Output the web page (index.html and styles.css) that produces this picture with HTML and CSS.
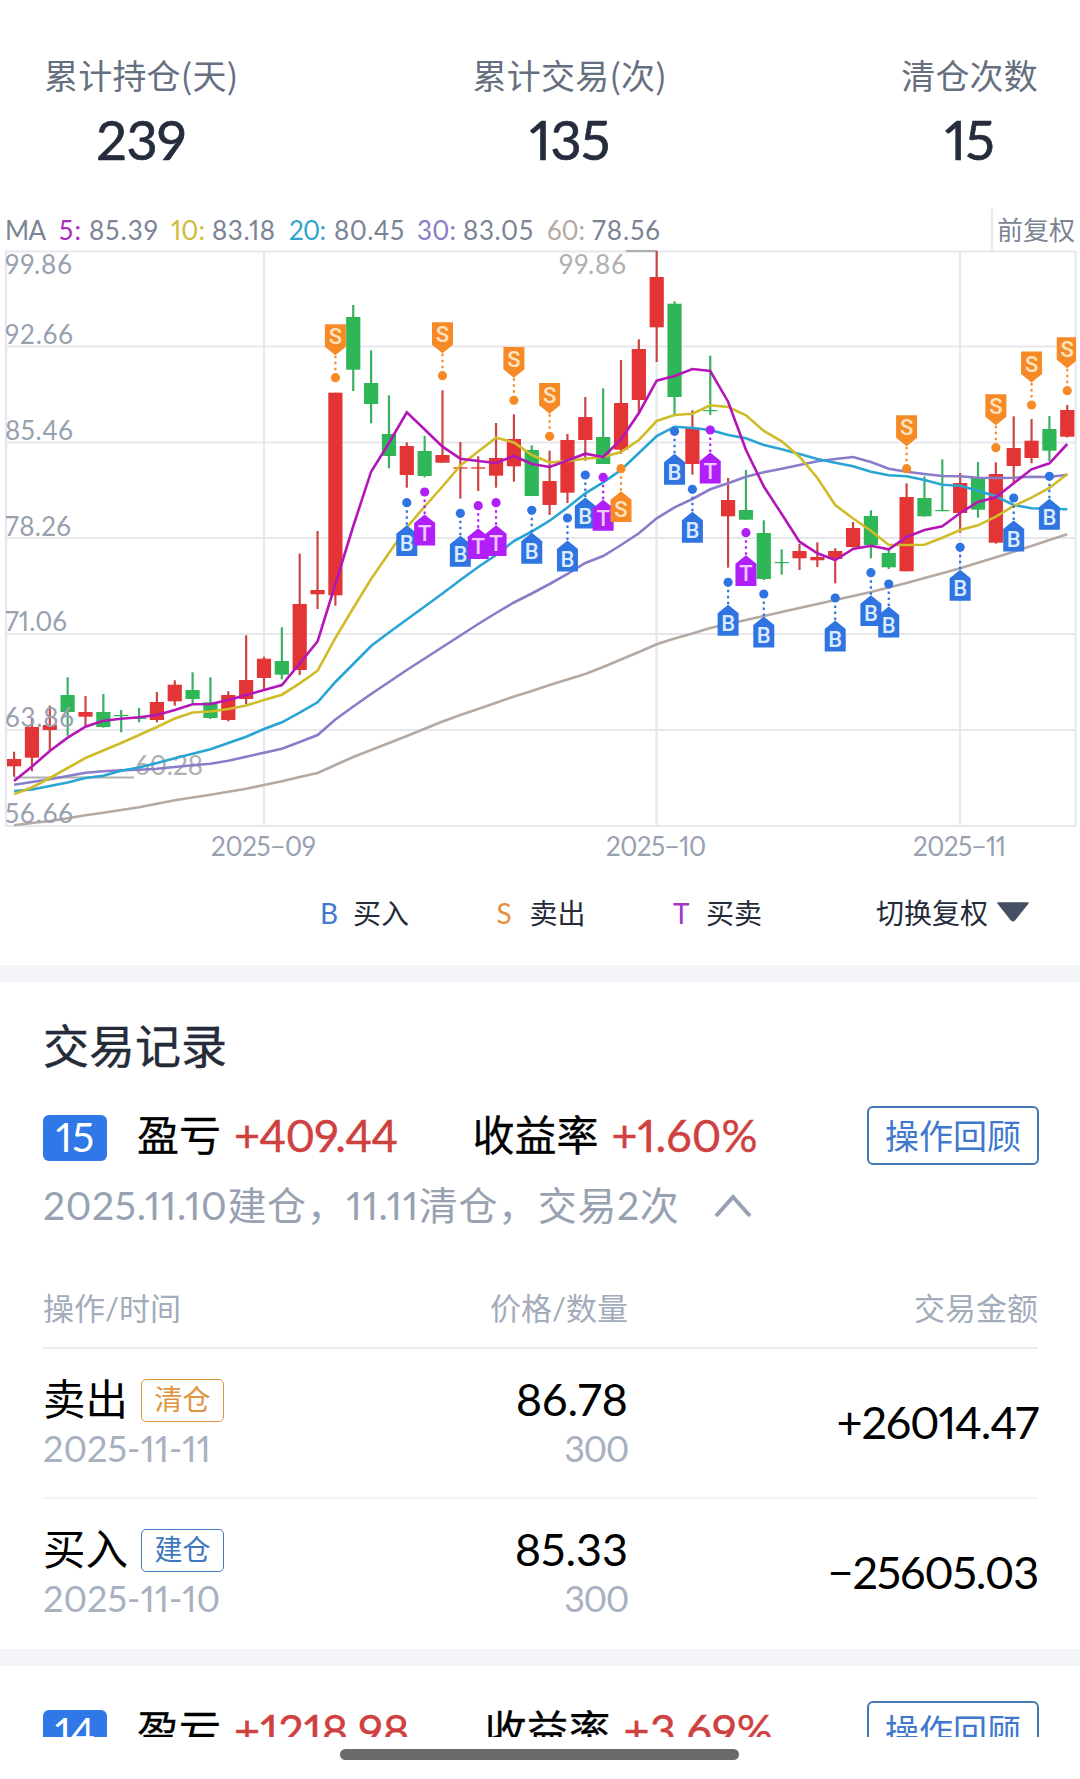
FILE: index.html
```html
<!DOCTYPE html>
<html lang="zh-CN">
<head>
    <meta charset="UTF-8">
    <meta name="viewport" content="width=device-width, initial-scale=1.0">
    <title>交易记录</title>
    <link rel="stylesheet" href="styles.css">
</head>
<body>
    <div class="page">
        <div class="stats">
            <div class="stat">
                <div class="stat-label">累计持仓(天)</div>
                <div class="stat-value">239</div>
            </div>
            <div class="stat">
                <div class="stat-label">累计交易(次)</div>
                <div class="stat-value">135</div>
            </div>
            <div class="stat">
                <div class="stat-label">清仓次数</div>
                <div class="stat-value">15</div>
            </div>
        </div>

        <svg id="chart" class="chart" width="1080" height="680" viewBox="0 200 1080 680"></svg>

        <div class="legend">
            <div class="legend-item"><span class="mark-b">B</span>买入</div>
            <div class="legend-item"><span class="mark-s">S</span>卖出</div>
            <div class="legend-item"><span class="mark-t">T</span>买卖</div>
            <div class="adjust">切换复权
                <svg width="34" height="20" viewBox="0 0 34 20"><path d="M2 1H32L18.5 18Q17 19.500 15.500 18Z" fill="#455064" stroke="#455064" stroke-width="1.500" stroke-linejoin="round"/></svg>
            </div>
        </div>

        <div class="divider"></div>

        <div class="records">
            <h2 class="records-title">交易记录</h2>
            <div class="record-head">
                <span class="badge">15</span>
                <span class="label">盈亏</span><span class="gain">+409.44</span>
                <span class="label label-rate">收益率</span><span class="gain gain-wide">+1.60%</span>
                <span class="review">操作回顾</span>
            </div>
            <div class="summary">
                <span>2025.11.10建仓，11.11清仓，交易2次</span>
                <svg width="40" height="26" viewBox="0 0 40 26"><path d="M3 23L20 4L37 23" fill="none" stroke="#98a1b1" stroke-width="4"/></svg>
            </div>
            <div class="table-head">
                <span>操作/时间</span>
                <span>价格/数量</span>
                <span>交易金额</span>
            </div>
            <div class="row">
                <div>
                    <div class="op">卖出<span class="tag tag-sell">清仓</span></div>
                    <div class="sub">2025‑11‑11</div>
                </div>
                <div class="price">
                    <div class="num">86.78</div>
                    <div class="sub count">300</div>
                </div>
                <div class="num amount">+26014.47</div>
            </div>
            <div class="row">
                <div>
                    <div class="op">买入<span class="tag tag-buy">建仓</span></div>
                    <div class="sub">2025‑11‑10</div>
                </div>
                <div class="price">
                    <div class="num">85.33</div>
                    <div class="sub count">300</div>
                </div>
                <div class="num amount">−25605.03</div>
            </div>
        </div>

        <div class="divider"></div>

        <div class="records next">
            <div class="record-head">
                <span class="badge">14</span>
                <span class="label">盈亏</span><span class="gain gain-wide">+1218.98</span>
                <span class="label label-rate">收益率</span><span class="gain gain-wide">+3.69%</span>
                <span class="review">操作回顾</span>
            </div>
        </div>
    </div>
    <div class="home-bar"></div>

<script src="chart.js"></script>
</body>
</html>
```
FILE: styles.css
```css
body, html {
    margin: 0;
    padding: 0;
    width: 1080px;
    height: 1779px;
    overflow: hidden;
    background: #fff;
    font-family: Lato, 'Noto Sans CJK SC', sans-serif;
    font-variant-numeric: proportional-nums;
}
.page {
    height: 1737px;
    overflow: hidden;
}
.stats {
    height: 200px;
    padding: 49px 42px 0 44px;
    box-sizing: border-box;
    display: flex;
    justify-content: space-between;
}
.stat {
    text-align: center;
}
.stat-label {
    font-family: 'Noto Sans CJK SC', sans-serif;
    font-size: 34px;
    line-height: 52px;
    letter-spacing: 0.2px;
    color: #666f80;
}
.stat-value {
    font-size: 54px;
    line-height: 77px;
    letter-spacing: -0.5px;
    color: #252d3d;
    -webkit-text-stroke: 0.7px #252d3d;
}
.chart {
    display: block;
}
.axis {
    font-size: 26px;
    fill: #98a1b0;
}
.info {
    font-size: 26px;
    fill: #7b8494;
}
.peak {
    font-size: 26px;
    fill: #b0b0b0;
}
.marker {
    font-size: 22px;
    font-weight: 500;
    font-family: Roboto, sans-serif;
    text-anchor: middle;
}
.legend {
    height: 85px;
    padding: 0 50px 21px 320px;
    box-sizing: border-box;
    display: flex;
    align-items: center;
    font-family: 'Noto Sans CJK SC', sans-serif;
    font-size: 28px;
    color: #252b38;
}
.legend-item {
    width: 176.5px;
    display: flex;
    align-items: baseline;
}
.legend-item span {
    width: 33px;
    font-family: Lato, sans-serif;
}
.mark-b { color: #3f78cc; }
.mark-s { color: #e58f3c; }
.mark-t { color: #a435c0; }
.adjust {
    margin-left: auto;
    display: flex;
    align-items: center;
    gap: 8px;
}
.divider {
    height: 17px;
    background: #f4f5f9;
}
.records {
    height: 667px;
    padding: 31px 42px 0 43px;
    box-sizing: border-box;
}
.records-title {
    margin: 0 0 32px;
    font-size: 46px;
    line-height: 60px;
    font-weight: 400;
    font-family: 'Noto Sans CJK SC', sans-serif;
    color: #252b38;
    -webkit-text-stroke: 0.4px #252b38;
}
.record-head {
    height: 60px;
    display: flex;
    align-items: center;
}
.badge {
    width: 64px;
    height: 46px;
    margin: 6px 30px 0 0;
    border-radius: 6px;
    background: #3077e8;
    color: #fff;
    font-size: 41px;
    line-height: 44px;
    text-align: center;
}
.label {
    margin-right: 13px;
    font-size: 42px;
    line-height: 60px;
    color: #000;
    -webkit-text-stroke: 0.3px #000;
}
.label-rate {
    margin-left: 75px;
}
.gain {
    font-size: 45px;
    line-height: 62px;
    letter-spacing: -0.8px;
    color: #cf4040;
    -webkit-text-stroke: 0.4px #cf4040;
}
.gain-wide {
    letter-spacing: 0.1px;
}
.review {
    margin: 0 -1px 0 auto;
    width: 172px;
    height: 59px;
    box-sizing: border-box;
    border: 2px solid #4478b4;
    border-radius: 6px;
    color: #3f78cc;
    font-size: 34px;
    line-height: 55px;
    text-align: center;
}
.summary {
    height: 78px;
    margin-bottom: 35px;
    display: flex;
    align-items: center;
    gap: 34px;
    font-size: 39px;
    letter-spacing: 0.65px;
    color: #98a1b1;
}
.summary span {
    margin-top: -2px;
}
.summary svg {
    margin-top: 4px;
}
.table-head {
    height: 71px;
    display: grid;
    grid-template-columns: 1fr 205px 1fr;
    line-height: 60px;
    font-size: 31px;
    color: #a3acbb;
    border-bottom: 2px solid #e9ebee;
    box-sizing: border-box;
}
.table-head span:nth-child(2) {
    width: 190px;
    text-align: right;
}
.table-head span:last-child {
    text-align: right;
}
.row {
    height: 150px;
    padding-top: 20px;
    display: grid;
    grid-template-columns: 1fr 205px 1fr;
    border-bottom: 2px solid #f2f3f5;
    box-sizing: border-box;
}
.row:last-child {
    border-bottom: none;
}
.op {
    height: 60px;
    display: flex;
    align-items: center;
    font-size: 42.5px;
    line-height: 56px;
    color: #000;
}
.tag {
    width: 83px;
    height: 43px;
    margin: 2px 0 0 13px;
    border: 1.5px solid;
    border-radius: 5px;
    box-sizing: border-box;
    font-size: 28px;
    line-height: 38px;
    text-align: center;
}
.tag-sell { color: #de9440; }
.tag-buy { color: #3f78bc; }
.sub {
    font-size: 36px;
    line-height: 38px;
    color: #a8b1c0;
}
.count {
    letter-spacing: -1.5px;
}
.price {
    width: 190px;
    text-align: right;
}
.num {
    font-size: 45px;
    line-height: 60px;
    color: #000;
}
.amount {
    margin-top: 23px;
    text-align: right;
    letter-spacing: -1.2px;
}
.next {
    padding-top: 34px;
}
.home-bar {
    width: 399px;
    height: 11px;
    margin: 12px 0 0 340px;
    border-radius: 6px;
    background: #6a6a6a;
}
```
FILE: chart.js
```js
const chart = document.getElementById('chart');
const RED = '#e33535', GREEN = '#2fb757';
const X = i => 14.1 + i * 17.85;

// [up, wick top, body top, body bottom, wick bottom]
const candles = [
    [1,751.7,759,766.3,776.7],[1,717.7,727,757.7,771.3],[1,705.7,725,730,750],[0,677.3,695,712,735.7],
    [1,696,712,716.7,726.7],[0,694,712,727,727.7],[0,710,715,716.2,732.3],[0,708,717.7,718.9,722.3],
    [1,692,702,720,722.3],[1,680.3,684.7,701.3,705.7],[0,672.3,690,699,703],[0,677.3,702.3,718,719],
    [1,691.3,695,720,721.3],[1,635.3,680,699,704],[1,656.7,658.7,678,689.3],[0,627.3,661,674.7,679.3],
    [1,553.7,604,670,675],[1,531,590,594.3,609],[1,392.7,392.7,595.3,605.7],[0,305,317,369.7,391],
    [0,350.3,383,404,423.3],[0,395.3,434,456,468.3],[1,442.3,446,475,487.7],[0,436,451,476,477.3],
    [1,390.3,455,462.7,462.7],[1,442,467.3,468.6,498.7],[1,456.3,467.3,468.6,491],[1,423,458,475.7,487.7],
    [1,414.3,439,466.3,481.7],[0,445.3,450,496,496],[1,450.7,481,505,515],[1,434,440,492.7,503],
    [1,397,417,440,460.7],[0,388.3,437,464,464],[1,360,403,449.7,453.7],[1,339.3,349,400,413.3],
    [1,251,277,327.3,362],[0,301.3,303.7,397,416],[1,410.3,427.7,464,474.7],[0,355.7,410,411.2,415],
    [1,478,500,516.3,567.7],[0,470,510,519.7,519.7],[0,520.3,533,579,580],[0,549.3,562,563.2,574.7],
    [1,544,551,558.3,570],[1,542.3,557,560.3,567],[1,548.3,551,559,583.3],[1,522,528,547,547.7],
    [0,510.3,516,545,558.3],[0,549,553,567.3,569],[1,483.3,497,571.3,571.3],[0,476.3,498,516.3,516.7],
    [0,459.3,510,511.2,511.2],[1,473,483,513,532.7],[0,462,477.7,509.7,517.7],[1,462.3,474,542.7,543.7],
    [1,416.3,448,466,482.7],[1,419,440.7,458,463.3],[0,416,429,450.7,461],[1,405,410,436.7,437.5]
];

const lines = [
    ['#b5a9a2', [825.3,823,821,818.3,815.3,812.7,810,807.3,803.8,800.3,797.5,794.7,791.7,788.7,785,781.3,777,773,765,757,750,743,736,728.7,721.5,715,709,702.7,696.5,691,685,679.5,674,667,659.5,652,644.3,638.5,633.5,628,624,620,616,612,608,604,600,596,592,587.5,582.9,578,573.2,568.3,562.8,557.2,551.7,546,540,534.3]],
    ['#8a7cc8', [784.7,782,779.3,776,772.7,771.3,770.3,769.7,768.7,767,765.3,763.7,760.7,756.7,752.7,748.7,742,735,719.5,706.5,694,682,670,658.5,647,635.5,624,613,602.5,593.5,584,574,563,556,545,533.3,518.3,507.3,499,489.3,483.3,476.7,472.3,468.7,465,461.3,459,457,462,468.7,471.7,474,476,476.3,477.7,478,477.7,476.7,477,474.7]],
    ['#28a5d2', [791,789.5,786,782.5,778,775.7,770.7,767.5,763,758.3,753.7,749.3,743,736.7,729,722.3,712.7,702.3,682,664,646,632.5,619.5,606.5,593.5,580,567,555,541,531.5,520.7,507.5,493.3,482.3,470,453,436,426.7,428,430,435,438.3,445,449.3,454,459,462.7,466.3,471.7,475.3,476.3,480,484.7,485.7,490.7,496.3,505,508.3,508.7,509.3]],
    ['#d0bb28', [794,787.5,778,768,758,750.5,743,735,727,718.5,712.5,711.5,709,705.5,700,694.7,683.3,670.7,638,608,579,553,527.5,506.5,486.5,465.5,451.5,437.7,442.5,455,462.5,461,458.7,457,452,440,421,415,413.7,405.3,407,415.3,431,441.3,456.7,478,505,518.5,530.7,545,545,544.7,537.7,530,525.3,516.7,506,497.7,488,474]],
    ['#b416b8', [781,766.5,751,737.7,726.7,720.7,718.7,717.3,715,710,704.3,704,700,695,690,685,663.5,641.3,584,526,471.7,443,412.3,429.5,446.7,458.7,461,463,456,464,467,460.5,453.7,457,439.5,413,380.7,376,369,371,401.7,450,486.5,514,541.7,553.3,560,549,545.7,549.3,537,530,526.3,513,502,497.3,483.3,469.3,463.3,444]]
];

// [letter, candle index, dot y, side: -1 above, 1 below]
const markers = [
    ['S',18,377.7,-1],['B',22,502.7,1],['T',23,492,1],['S',24,375.7,-1],['B',25,513.3,1],['T',26,505.7,1],
    ['T',27,502.7,1],['S',28,400.3,-1],['B',29,510.3,1],['S',30,436.3,-1],['B',31,518,1],['B',32,475,1],
    ['T',33,477.3,1],['S',34,468.7,1],['B',37,431.3,1],['B',38,489.3,1],['T',39,430,1],['B',40,582.3,1],
    ['T',41,532.7,1],['B',42,594,1],['B',46,598,1],['B',48,572.7,1],['B',49,584,1],['S',50,468.7,-1],
    ['B',53,547.3,1],['S',55,447.7,-1],['B',56,498,1],['S',57,405,-1],['B',58,476.3,1],['S',59,390.7,-1]
];
const markerColors = {
    S: ['#f68a26', '#ffe3bd'],
    B: ['#2f74e0', '#dcebff'],
    T: ['#b01ff8', '#f3c8ff']
};

function line(x1, y1, x2, y2, color, extra) {
    return `<line x1="${x1}" y1="${y1}" x2="${x2}" y2="${y2}" stroke="${color}" stroke-width="2.2" ${extra || ''}/>`;
}
function text(x, y, str, len, cls, fill) {
    return `<text x="${x}" y="${y}" textLength="${len}" class="${cls}" ${fill ? `style="fill:${fill}"` : ''}>${str}</text>`;
}

let svg = '<defs><clipPath id="plot"><rect x="5" y="200" width="1071" height="640"/></clipPath></defs>';

// grid
[251.5, 346.5, 442.5, 538, 634, 730, 826].forEach(y => svg += line(5, y, 1076, y, '#e7e8ed'));
[6, 264, 656.5, 960, 1075.5].forEach(x => svg += line(x, 251, x, 826, '#e7e8ed'));
svg += line(992, 209, 992, 251, '#e7e8ed');
svg += line(626, 251, 657, 251, '#b0b0b0') + line(14, 777.5, 134, 777.5, '#b0b0b0');
svg += text(559, 274, '99.86', 67, 'peak') + text(135, 775, '60.28', 68, 'peak');

candles.forEach(([up, high, top, bottom, low], i) => {
    svg += line(X(i), high, X(i), low, up ? '#c94642' : '#3bb060');
    svg += `<rect x="${X(i) - 7.1}" y="${top}" width="14.2" height="${bottom - top}" fill="${up ? RED : GREEN}"/>`;
});
lines.forEach(([color, ys]) => {
    const points = ys.map((y, i) => `${X(i).toFixed(1)},${y}`).join(' ');
    svg += `<polyline points="${points}" fill="none" stroke="${color}" stroke-width="2.6"/>`;
});

svg += '<g clip-path="url(#plot)">';
markers.forEach(([letter, i, y, side]) => {
    const x = X(i);
    const [bg, fg] = markerColors[letter];
    svg += line(x, y + side * 22, x, y, bg, 'stroke-dasharray="2.500 3.500"');
    svg += `<circle cx="${x}" cy="${y}" r="4.600" fill="${bg}"/>`;
    svg += `<path d="M${x} ${y + side * 22.5}L${x + 10.5} ${y + side * 31}V${y + side * 53.4}H${x - 10.5}V${y + side * 31}Z" fill="${bg}"/>`;
    svg += `<text x="${x}" y="${y + side * 41 + 7.5}" class="marker" fill="${fg}">${letter}</text>`;
});
svg += '</g>';

// price and date axes
[['99.86', 274, 67], ['92.66', 344, 68], ['85.46', 440, 68], ['78.26', 535.5, 66], ['71.06', 631, 62], ['63.86', 727, 69], ['56.66', 822.5, 68]]
    .forEach(([str, y, len]) => svg += text(5, y, str, len, 'axis'));
svg += text(211, 855.5, '2025−09', 105, 'axis') + text(606, 855.5, '2025−10', 100, 'axis') + text(913, 855.5, '2025−11', 93, 'axis');

// moving average header
svg += text(5, 240, 'MA', 41, 'info');
[['5:', 59, 22, '#a82cb8', '85.39', 89, 69], ['10:', 171, 34, '#d0bb3a', '83.18', 212, 63], ['20:', 289, 37, '#30a4d0', '80.45', 334, 70], ['30:', 417, 39, '#8a7cc8', '83.05', 463, 70], ['60:', 547, 38, '#b5a9a2', '78.56', 592, 68]]
    .forEach(([name, x, len, color, value, vx, vlen]) => {
        svg += text(x, 240, name, len, 'info', color) + text(vx, 240, value, vlen, 'info');
    });
svg += text(997, 240, '前复权', 78, 'info');

chart.innerHTML = svg;
```
